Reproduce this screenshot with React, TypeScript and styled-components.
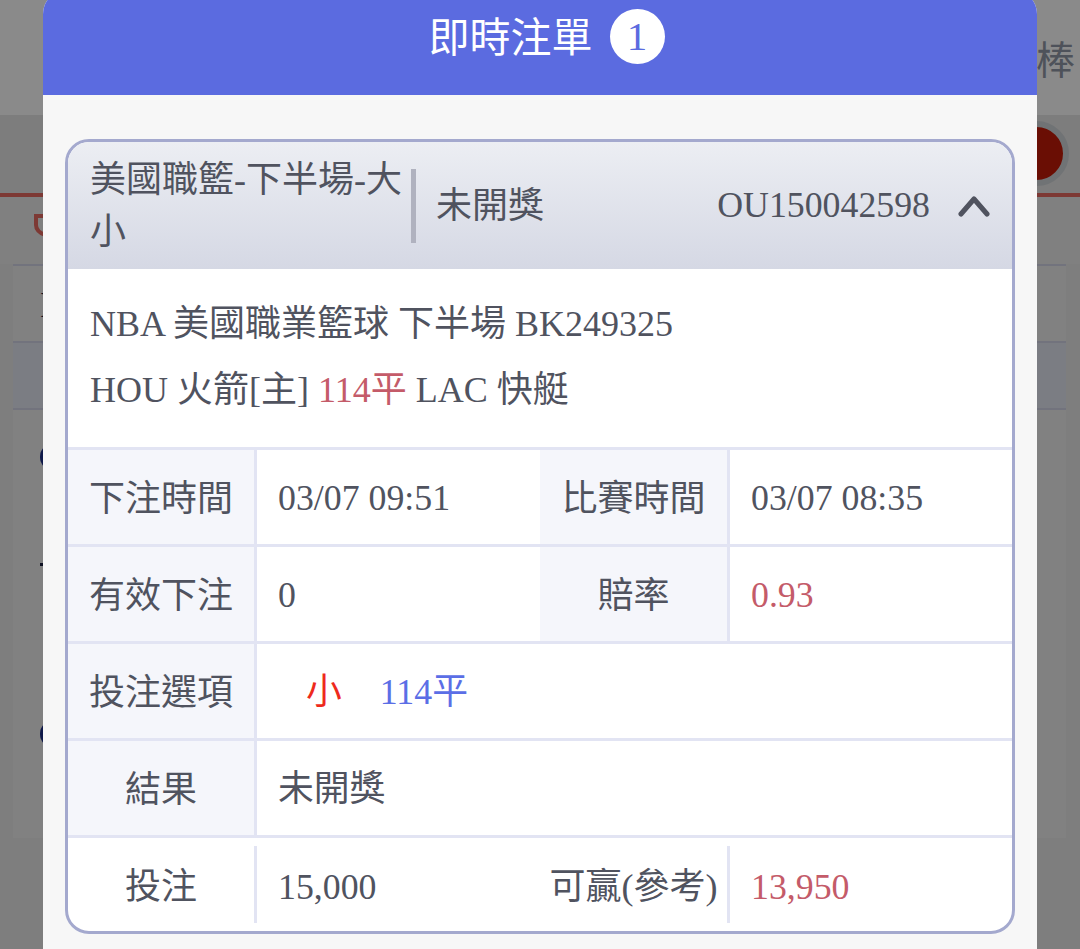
import styled, { createGlobalStyle } from "styled-components";

const GlobalStyle = createGlobalStyle`
  html, body {
    margin: 0;
    height: 949px;
    overflow: hidden;
    background: #e6e6e6;
    font-family: "Liberation Serif", "Noto Sans CJK TC", serif;
  }
`;

const detailRows = [
  { label: "下注時間", value: "03/07 09:51", label2: "比賽時間", value2: "03/07 08:35" },
  { label: "有效下注", value: "0", label2: "賠率", value2: "0.93", hot: true },
];

export default function App() {
  return (
    <>
      <GlobalStyle />
      <Page>
        <TopBar>棒</TopBar>
        <SubBar>
          <RedDot />
        </SubBar>
        <ShieldRow>
          <svg width="22" height="24" viewBox="0 0 22 24" fill="none">
            <path d="M2 3h18v9c0 5-4 8-9 10-5-2-9-5-9-10z" stroke="#e3695f" strokeWidth="4" />
          </svg>
        </ShieldRow>
        <BackTable>
          <BackRow $h={77}>
            <BackGlyph>I</BackGlyph>
          </BackRow>
          <BackRow $h={67} $tint />
          <BackRow $h={90} $plain>
            <BackDot />
          </BackRow>
          <BackRow $h={126} $plain>
            <BackTick />
          </BackRow>
          <BackRow $h={212} $plain>
            <BackDot />
          </BackRow>
        </BackTable>
      </Page>

      <Backdrop />

      <Modal>
        <ModalHeader>
          <ModalTitle>即時注單</ModalTitle>
          <CountBadge>1</CountBadge>
        </ModalHeader>

        <ModalBody>
          <Card>
            <CardHeader>
              <GameName>美國職籃-下半場-大小</GameName>
              <Divider />
              <Status>未開獎</Status>
              <OrderId>OU150042598</OrderId>
              <svg width="32" height="24" viewBox="0 0 32 24" fill="none">
                <path d="M3 20 16 5l13 15" stroke="#50535f" strokeWidth="5" strokeLinecap="round" strokeLinejoin="round" />
              </svg>
            </CardHeader>

            <MatchInfo>
              <div>NBA 美國職業籃球 下半場 BK249325</div>
              <div>
                HOU 火箭[主] <Hot>114平</Hot> LAC 快艇
              </div>
            </MatchInfo>

            {detailRows.map((row) => (
              <TableRow key={row.label}>
                <Label>{row.label}</Label>
                <Value>{row.value}</Value>
                <Label>{row.label2}</Label>
                <Value>{row.hot ? <Hot>{row.value2}</Hot> : row.value2}</Value>
              </TableRow>
            ))}

            <WideRow>
              <Label>投注選項</Label>
              <Value>
                <Pick>小</Pick>
                <Line>114平</Line>
              </Value>
            </WideRow>

            <WideRow>
              <Label>結果</Label>
              <Value>未開獎</Value>
            </WideRow>

            <LastRow>
              <LastLabel>投注</LastLabel>
              <LastValue>15,000</LastValue>
              <LastLabel>可贏(參考)</LastLabel>
              <LastValue>
                <Hot>13,950</Hot>
              </LastValue>
            </LastRow>
          </Card>
        </ModalBody>
      </Modal>
    </>
  );
}

const Page = styled.div`
  width: 1080px;
  height: 949px;
  overflow: hidden;
  background: #e6e6e6;
`;

const TopBar = styled.div`
  height: 115px;
  box-sizing: border-box;
  display: flex;
  justify-content: flex-end;
  align-items: center;
  padding: 0 5px 2px 0;
  background: #fbfbfb;
  font-size: 39px;
  color: #8f96a4;
`;

const SubBar = styled.div`
  height: 78px;
  box-sizing: border-box;
  display: flex;
  justify-content: flex-end;
  align-items: center;
  padding: 0 11px 1px 0;
  background: #e3e3e3;
`;

const RedDot = styled.div`
  width: 53px;
  height: 53px;
  border-radius: 50%;
  background: #c11b09;
  border: 6px solid #cdd1d5;
`;

const ShieldRow = styled.div`
  height: 71px;
  box-sizing: border-box;
  display: flex;
  align-items: flex-start;
  padding: 16px 0 0 34px;
  background: #e9e9e9;
  border-top: 4px solid #e3695f;
`;

const BackTable = styled.div`
  width: 1053px;
  margin-left: 13px;
  border-top: 2px solid #cfd1e4;
  background: #ebebeb;
`;

const BackRow = styled.div<{ $h: number; $tint?: boolean; $plain?: boolean }>`
  height: ${(p) => p.$h}px;
  box-sizing: border-box;
  display: flex;
  align-items: center;
  padding: 3px 0 0 27px;
  background: ${(p) => (p.$tint ? "#e0e3ee" : "transparent")};
  border-bottom: ${(p) => (p.$plain ? "0" : "2px solid #cfd1e4")};
`;

const BackGlyph = styled.span`
  font-size: 36px;
  color: #1c2140;
`;

const BackDot = styled.div`
  width: 28px;
  height: 28px;
  border-radius: 50%;
  background: #1d2e86;
`;

const BackTick = styled.div`
  width: 8px;
  height: 3px;
  background: #1c2140;
`;

const Backdrop = styled.div`
  position: fixed;
  inset: 0;
  background: rgba(0, 0, 0, 0.45);
`;

const Modal = styled.div`
  position: fixed;
  top: -10px;
  left: 43px;
  width: 994px;
  height: 1000px;
  border-radius: 24px 24px 0 0;
  overflow: hidden;
  background: #f7f7f7;
`;

const ModalHeader = styled.div`
  height: 105px;
  box-sizing: border-box;
  display: flex;
  justify-content: center;
  align-items: center;
  gap: 17px;
  padding: 0 2px 13px 15px;
  background: #5b6be0;
`;

const ModalTitle = styled.div`
  margin-top: 4px;
  font-size: 41px;
  line-height: 1;
  color: #fff;
`;

const CountBadge = styled.div`
  width: 55px;
  height: 55px;
  border-radius: 50%;
  display: flex;
  justify-content: center;
  align-items: center;
  background: #fff;
  font-size: 41px;
  line-height: 1;
  color: #5b6be0;
`;

const ModalBody = styled.div`
  padding: 44px 22px 0;
`;

const Card = styled.div`
  height: 795px;
  box-sizing: border-box;
  border: 3px solid #a4a9ce;
  border-radius: 24px;
  overflow: hidden;
  background: #fff;
  font-size: 36px;
  color: #50535f;
`;

const CardHeader = styled.div`
  height: 127px;
  box-sizing: border-box;
  display: flex;
  align-items: center;
  padding: 0 22px;
  line-height: 1;
  background: linear-gradient(#eceef3, #d5d8e4);
`;

const GameName = styled.div`
  width: 321px;
  flex: none;
  line-height: 52px;
`;

const Divider = styled.div`
  width: 5px;
  height: 74px;
  flex: none;
  background: #b0b2bf;
`;

const Status = styled.div`
  margin-left: 20px;
`;

const OrderId = styled.div`
  margin: 0 28px 0 auto;
  font-size: 35.8px;
`;

const MatchInfo = styled.div`
  height: 178px;
  box-sizing: border-box;
  padding: 22px 0 0 22px;
  line-height: 66px;
`;

const TableRow = styled.div`
  height: 97px;
  box-sizing: border-box;
  display: grid;
  grid-template-columns: 189px 283px 190px 1fr;
  border-top: 3px solid #e2e4f3;
  line-height: 1;
`;

const WideRow = styled(TableRow)`
  grid-template-columns: 189px 1fr;
`;

const LastRow = styled(TableRow)`
  height: 96px;
`;

const Label = styled.div`
  display: flex;
  justify-content: center;
  align-items: center;
  padding-top: 3px;
  background: #f5f6fb;
  border-right: 3px solid #e2e4f3;
`;

const Value = styled.div`
  display: flex;
  align-items: center;
  padding: 3px 0 0 21px;
  font-size: 35.8px;
`;

const LastLabel = styled(Label)`
  margin: 8px 0;
  padding-top: 4px;
  background: transparent;
`;

const LastValue = styled(Value)`
  padding-top: 6px;
`;

const Hot = styled.span`
  color: #c45b69;
`;

const Pick = styled.span`
  margin-left: 28px;
  color: #ee2a1c;
`;

const Line = styled.span`
  margin-left: 38px;
  color: #5b6ee6;
`;
